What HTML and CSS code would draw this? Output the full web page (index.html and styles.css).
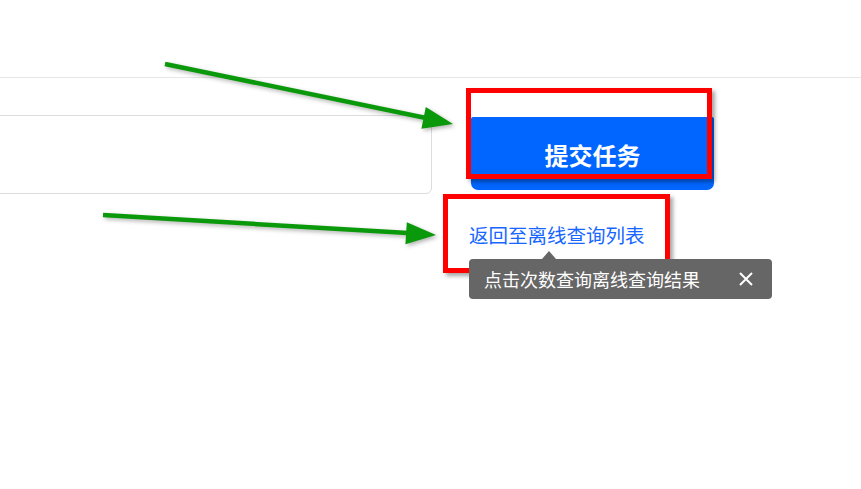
FILE: index.html
```html
<!DOCTYPE html>
<html lang="zh-CN">
<head>
    <meta charset="UTF-8">
    <meta name="viewport" content="width=device-width, initial-scale=1.0">
    <title>提交任务</title>
    <link rel="stylesheet" href="styles.css">
</head>
<body>

    <div class="header"></div>

    <div class="main">
        <div class="input-box"></div>
        <div class="actions">
            <button class="submit-btn">提交任务</button>
            <a class="back-link" href="#">返回至离线查询列表</a>
        </div>
    </div>

    <!-- Tip popup -->
    <div class="tip">
        <span class="tip-text">点击次数查询离线查询结果</span>
        <svg class="tip-close" width="16" height="16" viewBox="0 0 16 16">
            <path d="M2 2 L14 14 M14 2 L2 14" stroke="#fff" stroke-width="2" fill="none"/>
        </svg>
    </div>

    <!-- Annotations -->
    <div class="mark mark-submit"></div>
    <div class="mark mark-back"></div>

    <svg class="arrows" width="861" height="489" viewBox="0 0 861 489">
        <g class="arrow">
            <line x1="165" y1="64" x2="426" y2="118" stroke-width="4.5"/>
            <polygon points="453,124 425.8,107.1 421.4,128.7"/>
        </g>
        <g class="arrow">
            <line x1="103" y1="215" x2="408" y2="233" stroke-width="4.5"/>
            <polygon points="436,235 406.8,222.2 405.4,244.2"/>
        </g>
    </svg>

</body>
</html>
```

FILE: styles.css
```css
body {
    margin: 0;
    padding: 0;
    background: #fff;
    font-family: "Microsoft YaHei", "Noto Sans CJK SC", sans-serif;
    overflow: hidden;
}

.header {
    height: 77px;
    border-bottom: 1px solid #e6e6e6;
}

.main {
    display: flex;
    align-items: flex-start;
    padding-top: 37px;
}

.input-box {
    margin-left: -20px;
    width: 450px;
    height: 77px;
    border: 1px solid #dcdcdc;
    border-radius: 6px;
    flex-shrink: 0;
}

.actions {
    margin-left: 39px;
    padding-top: 2px;
    width: 243px;
    display: flex;
    flex-direction: column;
}

.submit-btn {
    height: 73px;
    background: #0066ff;
    color: #fff;
    border: none;
    border-radius: 2px 2px 7px 7px;
    font-family: inherit;
    font-size: 24px;
    font-weight: bold;
    padding: 0;
    padding-top: 2px;
    cursor: pointer;
}

.back-link {
    margin-top: 31px;
    margin-left: -2px;
    font-size: 19.5px;
    line-height: 28px;
    color: #1766ff;
    text-decoration: none;
}

/* Tip popup */
.tip {
    position: absolute;
    left: 469px;
    top: 259px;
    width: 303px;
    height: 40px;
    background: #666;
    border-radius: 4px;
    display: flex;
    align-items: center;
    justify-content: space-between;
    padding: 0 18px 0 15px;
    box-sizing: border-box;
    z-index: 3;
}

.tip::before {
    content: "";
    position: absolute;
    left: 73px;
    top: -8px;
    border-left: 7px solid transparent;
    border-right: 7px solid transparent;
    border-bottom: 8px solid #666;
}

.tip-text {
    color: #fff;
    font-size: 18px;
}

/* Annotations */
.mark {
    position: absolute;
    border: 5px solid #ff0000;
    box-sizing: border-box;
    box-shadow: 3px 3px 4px rgba(0,0,0,0.35);
    z-index: 2;
}

.mark-submit {
    left: 466px;
    top: 88px;
    width: 246px;
    height: 91px;
}

.mark-back {
    left: 443px;
    top: 194px;
    width: 227px;
    height: 79px;
}

.arrows {
    position: absolute;
    left: 0;
    top: 0;
    z-index: 4;
    filter: drop-shadow(2px 2px 2px rgba(0,0,0,0.3));
}

.arrow line {
    stroke: #0a990a;
}

.arrow polygon {
    fill: #0a990a;
}
```
